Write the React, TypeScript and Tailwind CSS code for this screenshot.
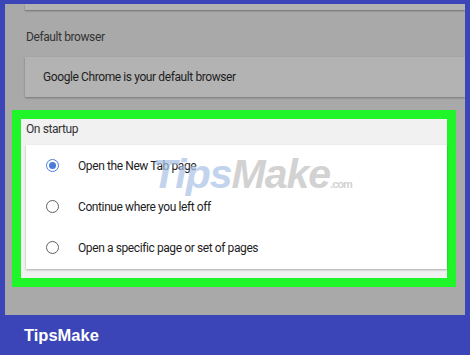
const options = [
  { label: 'Open the New Tab page', checked: true },
  { label: 'Continue where you left off', checked: false },
  { label: 'Open a specific page or set of pages', checked: false },
]

const Radio = ({ checked }: { checked: boolean }) => {
  if (checked) {
    return (
      <span className="flex h-[13px] w-[13px] items-center justify-center rounded-full border-[1.5px] border-[#4a7ddb]">
        <span className="h-[7px] w-[7px] rounded-full bg-[#4a7ddb]" />
      </span>
    )
  }
  return <span className="h-[13px] w-[13px] rounded-full border-[1.5px] border-[#5f5f5f]" />
}

const App = () => {
  return (
    <div className="relative flex h-[355px] w-[470px] flex-col overflow-hidden bg-[#3c45b7] px-[5px] pt-[4px] font-['Roboto',Arial,sans-serif] tracking-[-0.4px]">
      <div className="flex h-[311px] flex-col overflow-hidden bg-[#a9a9a9]">
        <div className="ml-[20px] h-[6px] shrink-0 bg-[#b2b2b2] shadow-[0_1px_2px_rgba(0,0,0,0.35)]" />
        <p className="mt-[19px] pl-[21px] text-[12px] leading-[16px] text-[#333]">Default browser</p>
        <div className="ml-[20px] mt-[12px] flex h-[40px] shrink-0 items-center bg-[#b3b3b3] pl-[18px] shadow-[0_1px_2px_rgba(0,0,0,0.3)]">
          <span className="text-[12px] text-[#1e1e1e]">Google Chrome is your default browser</span>
        </div>
        <div className="ml-[7px] mt-[13px] h-[177px] w-[444px] shrink-0 border-[9px] border-[#20f52a]">
          <div className="flex h-full flex-col bg-[#f1f1f1]">
            <p className="h-[26px] pl-[5px] pt-[2px] text-[12px] leading-[16px] text-[#333]">On startup</p>
            <div className="ml-[5px] flex h-[124px] flex-col bg-white shadow-[0_1px_2px_rgba(0,0,0,0.3)]">
              {options.map((o) => (
                <div key={o.label} className="flex h-[41px] items-center gap-[19px] pl-[20px]">
                  <Radio checked={o.checked} />
                  <span className="text-[12px] text-[#1e1e1e]">{o.label}</span>
                </div>
              ))}
            </div>
          </div>
        </div>
      </div>
      <div className="flex h-[40px] items-center pl-[19px]">
        <span className="font-['Liberation_Sans',Arial,sans-serif] text-[16.5px] font-bold tracking-normal text-white">TipsMake</span>
      </div>
      <div className="pointer-events-none absolute left-[152px] top-[150px] flex items-baseline font-['Liberation_Sans',Arial,sans-serif] text-[41px] font-bold italic leading-[48px] tracking-[-1px]">
        <span className="text-[#a9c2e6] opacity-70">Tips</span>
        <span className="text-[#c0c0c0] opacity-70">Make</span>
        <span className="text-[11px] not-italic text-[#c0c0c0] opacity-70">.com</span>
      </div>
    </div>
  )
}

export default App
